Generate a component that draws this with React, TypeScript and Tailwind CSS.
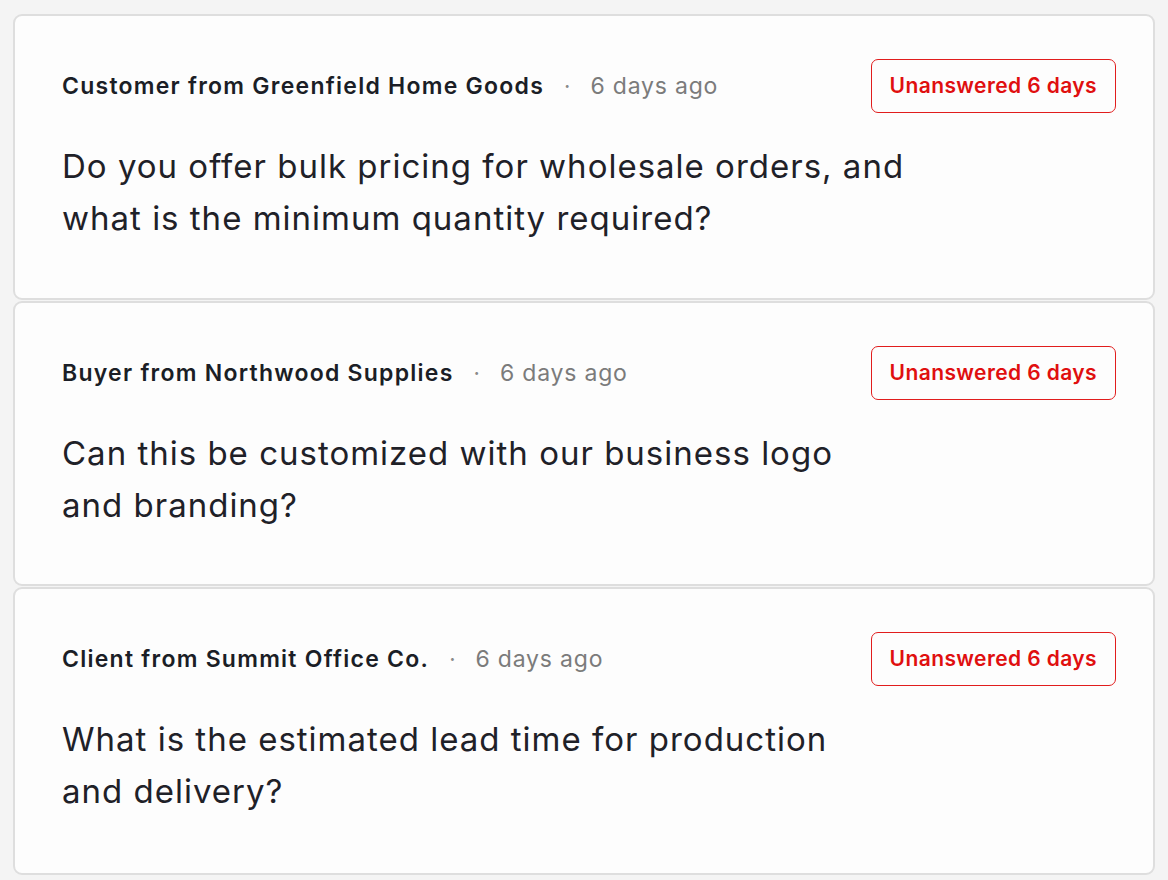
const questions = [
  {
    who: "Customer from Greenfield Home Goods",
    when: "6 days ago",
    lines: ["Do you offer bulk pricing for wholesale orders, and", "what is the minimum quantity required?"],
    card: "h-[286px]",
  },
  {
    who: "Buyer from Northwood Supplies",
    when: "6 days ago",
    lines: ["Can this be customized with our business logo", "and branding?"],
    card: "h-[285px]",
  },
  {
    who: "Client from Summit Office Co.",
    when: "6 days ago",
    lines: ["What is the estimated lead time for production", "and delivery?"],
    card: "h-[288px] pt-[40px]",
  },
];

export default function App() {
  return (
    <div
      className="min-h-screen bg-[#f4f4f4] pl-[13px] pt-[14px] flex flex-col gap-[1px]"
      style={{ fontFamily: "Inter, 'Noto Sans', sans-serif" }}
    >
      {questions.map((q) => (
        <div
          key={q.who}
          className={`w-[1142px] bg-[#fdfdfd] border-2 border-[#dedede] rounded-[9px] pl-[47px] pr-[37px] pt-[43px] ${q.card}`}
        >
          <div className="flex items-center justify-between h-[54px]">
            <div className="flex items-center">
              <span className="text-[23px] font-semibold text-[#1b1e26] tracking-[1.25px]">{q.who}</span>
              <span className="text-[#8a8a8a] text-[22px] mx-[20px]">·</span>
              <span className="text-[23px] text-[#7b7b7b] tracking-[0.8px]">{q.when}</span>
            </div>
            <div className="h-[54px] px-[18px] flex items-center border-[1.5px] border-[#e11d1d] rounded-[7px] text-[#e00f0f] text-[21px] font-semibold tracking-[0.4px]">
              Unanswered 6 days
            </div>
          </div>
          <p className="mt-[27px] text-[33px] leading-[52px] text-[#1f2128] tracking-[1px]">
            {q.lines[0]}
            <br />
            {q.lines[1]}
          </p>
        </div>
      ))}
    </div>
  );
}
